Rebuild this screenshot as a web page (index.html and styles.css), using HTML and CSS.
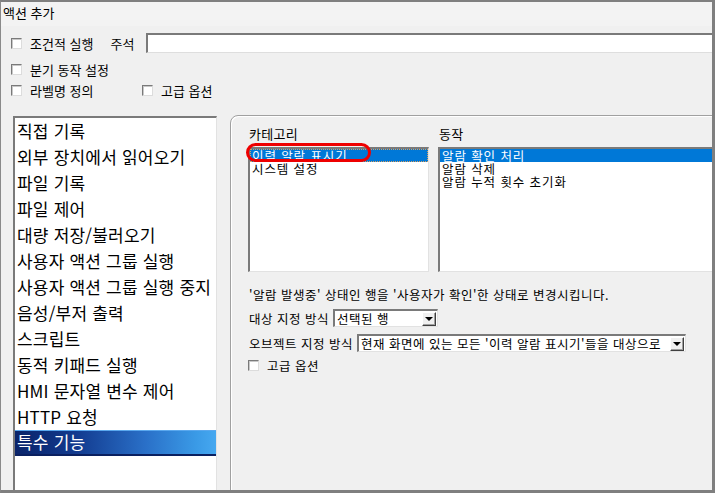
FILE: index.html
```html
<!DOCTYPE html>
<html lang="ko">
<head>
<meta charset="utf-8">
<title>액션 추가</title>
<link rel="stylesheet" href="styles.css">
</head>
<body>
<div class="win">
  <div class="title">액션 추가</div>
  <div class="row row1">
    <span class="cb"></span><span class="lbl">조건적 실행</span>
    <span class="lbl memo">주석</span>
    <span class="input"></span>
  </div>
  <div class="row row2">
    <span class="cb"></span><span class="lbl">분기 동작 설정</span>
  </div>
  <div class="row row3">
    <span class="cb"></span><span class="lbl lbl-w">라벨명 정의</span>
    <span class="cb"></span><span class="lbl">고급 옵션</span>
  </div>
  <div class="main">
    <ul class="biglist">
      <li>직접 기록</li>
      <li>외부 장치에서 읽어오기</li>
      <li>파일 기록</li>
      <li>파일 제어</li>
      <li>대량 저장/불러오기</li>
      <li>사용자 액션 그룹 실행</li>
      <li>사용자 액션 그룹 실행 중지</li>
      <li>음성/부저 출력</li>
      <li>스크립트</li>
      <li>동적 키패드 실행</li>
      <li>HMI 문자열 변수 제어</li>
      <li>HTTP 요청</li>
      <li class="sel">특수 기능</li>
    </ul>
    <div class="group">
      <div class="cols">
        <div class="col col-cat">
          <div class="cap">카테고리</div>
          <ul class="smalllist">
            <li class="sel focus">이력 알람 표시기</li>
            <li>시스템 설정</li>
          </ul>
        </div>
        <div class="col col-act">
          <div class="cap">동작</div>
          <ul class="smalllist">
            <li class="sel">알람 확인 처리</li>
            <li>알람 삭제</li>
            <li>알람 누적 횟수 초기화</li>
          </ul>
        </div>
      </div>
      <div class="desc">'알람 발생중' 상태인 행을 '사용자가 확인'한 상태로 변경시킵니다.</div>
      <div class="frow frow1">
        <span class="flbl">대상 지정 방식</span>
        <span class="select s1"><span class="val">선택된 행</span><span class="btn"><span class="tri"></span></span></span>
      </div>
      <div class="frow frow2">
        <span class="flbl">오브젝트 지정 방식</span>
        <span class="select s2"><span class="val">현재 화면에 있는 모든 '이력 알람 표시기'들을 대상으로</span><span class="btn"><span class="tri"></span></span></span>
      </div>
      <div class="frow frow3">
        <span class="cb"></span><span class="flbl adv">고급 옵션</span>
      </div>
      <div class="mark"></div>
    </div>
  </div>
</div>
</body>
</html>
```

FILE: styles.css
```css
* { box-sizing: border-box; }
html, body { margin: 0; padding: 0; }
body {
  width: 715px;
  height: 493px;
  overflow: hidden;
  background: #f0f0f0;
  font-family: "Noto Sans CJK KR", "Noto Sans", sans-serif;
  color: #000;
}
ul { list-style: none; margin: 0; padding: 0; }

.win {
  width: 715px;
  height: 493px;
  border-top: 2px solid #7f7f7f;
  border-right: 3px solid #7f7f7f;
  border-bottom: 3px solid #7f7f7f;
  border-left: 1px solid #8a8a8a;
  background: #f0f0f0;
  overflow: hidden;
  display: flex;
  flex-direction: column;
}

.title {
  height: 24px;
  line-height: 21px;
  padding-left: 2px;
  font-size: 13px;
  background: #f3f3f3;
  flex-shrink: 0;
}

.row {
  display: flex;
  align-items: center;
  height: 20px;
  flex-shrink: 0;
  padding-left: 10px;
  font-size: 13px;
}
.row1 { margin-top: 7px; }
.row2 { margin-top: 6px; }
.row3 { margin-top: 1px; }

.cb {
  width: 11px;
  height: 11px;
  flex-shrink: 0;
  background: #fff;
  border-top: 1px solid #7a7a7a;
  border-left: 1px solid #7a7a7a;
  border-right: 1px solid #dcdcdc;
  border-bottom: 1px solid #dcdcdc;
  box-shadow: inset 1px 1px 0 #c8c8c8;
}
.lbl { margin-left: 8px; white-space: nowrap; }
.lbl-w { width: 112px; }
.memo { margin-left: 17px; }

.input {
  flex: 1;
  height: 20px;
  margin-left: 12px;
  background: #fff;
  border-top: 2px solid #7a7a7a;
  border-left: 2px solid #7a7a7a;
  border-bottom: 1px solid #dedede;
  align-self: flex-start;
}

.main {
  flex: 1;
  display: flex;
  padding-top: 16px;
  padding-left: 12px;
  gap: 13px;
  overflow: hidden;
  min-height: 0;
}

.biglist {
  width: 204px;
  height: 420px;
  flex-shrink: 0;
  background: #fff;
  border-top: 2px solid #7a7a7a;
  border-left: 2px solid #7a7a7a;
  border-right: 1px solid #e2e2e2;
  font-size: 17px;
  letter-spacing: 0.2px;
}
.biglist li {
  height: 26px;
  line-height: 25px;
  padding-left: 2px;
  white-space: nowrap;
}
.biglist li.sel {
  color: #fff;
  background: linear-gradient(to right, #0a246a 0%, #123a8e 30%, #2a70c8 65%, #3a9ae6 90%, #46a8f0 100%);
  border-top: 1px solid #5aa8ee;
  border-bottom: 2px solid #0a2060;
  line-height: 22px;
}

.group {
  position: relative;
  width: 520px;
  height: 420px;
  flex-shrink: 0;
  margin-top: -1px;
  border: 1px solid #a0a0a0;
  border-top-left-radius: 8px;
  box-shadow: inset 1px 1px 0 #ffffff;
  padding: 10px 0 0 17px;
  font-size: 12.5px;
  letter-spacing: 0.5px;
}

.cols { display: flex; gap: 9px; }
.col-cat { width: 181px; flex-shrink: 0; }
.col-act { width: 300px; flex-shrink: 0; }
.cap {
  height: 16px;
  line-height: 16px;
  font-size: 13px;
  padding-left: 1px;
  letter-spacing: 0.3px;
}
.smalllist {
  margin-top: 5px;
  height: 125px;
  background: #fff;
  border-top: 2px solid #7a7a7a;
  border-left: 2px solid #7a7a7a;
  border-right: 1px solid #e2e2e2;
  border-bottom: 1px solid #e2e2e2;
  font-size: 12.5px;
  letter-spacing: 0.9px;
}
.smalllist li {
  height: 13px;
  line-height: 13px;
  padding-left: 2px;
  white-space: nowrap;
}
.smalllist li.sel {
  background: #0078d7;
  color: #fff;
}
.smalllist li.focus {
  outline: 1px dotted #d8a060;
  outline-offset: -1px;
}

.desc {
  margin-top: 15px;
  height: 16px;
  line-height: 16px;
  padding-left: 1px;
  white-space: nowrap;
}
.frow {
  display: flex;
  align-items: center;
  white-space: nowrap;
}
.frow1 { margin-top: 5px; height: 20px; }
.frow2 { margin-top: 5px; height: 20px; }
.frow3 { margin-top: 4px; height: 16px; }
.flbl { padding-left: 1px; }
.frow1 .flbl { width: 85px; }
.frow2 .flbl { width: 109px; }
.adv { margin-left: 7px; }

.select {
  display: flex;
  align-items: center;
  height: 18px;
  background: #fff;
  border-top: 2px solid #7a7a7a;
  border-left: 2px solid #7a7a7a;
  border-right: 1px solid #e2e2e2;
  border-bottom: 1px solid #e2e2e2;
  padding-right: 1px;
}
.s1 { width: 105px; }
.s2 { width: 329px; }
.val { flex: 1; padding-left: 2px; line-height: 14px; white-space: nowrap; }
.btn {
  width: 14px;
  height: 14px;
  flex-shrink: 0;
  background: #f0f0f0;
  border-top: 1px solid #fff;
  border-left: 1px solid #fff;
  border-right: 1px solid #404040;
  border-bottom: 1px solid #404040;
  box-shadow: inset -1px -1px 0 #a0a0a0;
  display: flex;
  align-items: center;
  justify-content: center;
}
.tri {
  width: 0;
  height: 0;
  border-left: 4px solid transparent;
  border-right: 4px solid transparent;
  border-top: 4px solid #000;
}

.mark {
  position: absolute;
  left: 15px;
  top: 27px;
  width: 125px;
  height: 19px;
  border: 3px solid #ee0000;
  border-radius: 10px;
}
```
